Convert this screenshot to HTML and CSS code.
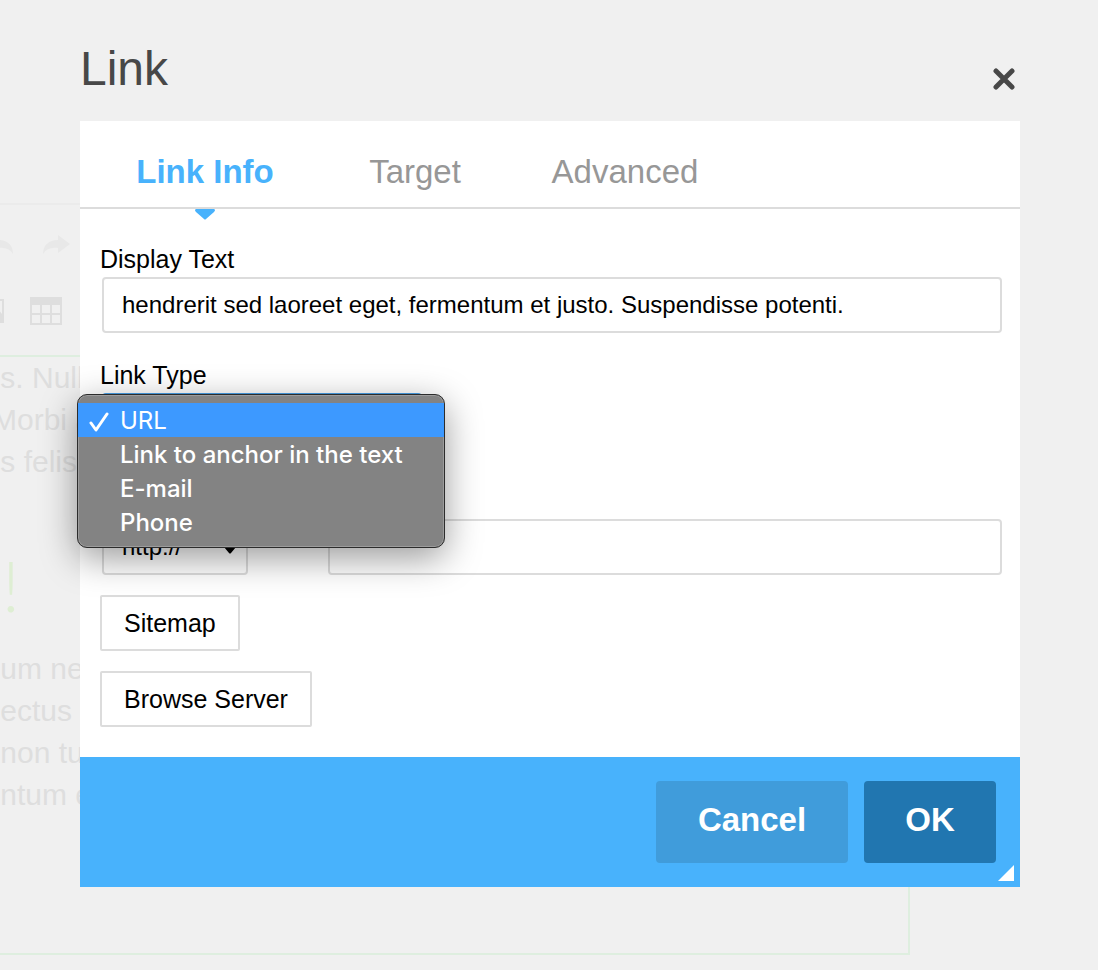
FILE: index.html
```html
<!DOCTYPE html>
<html lang="en">
<head>
    <meta charset="UTF-8">
    <meta name="viewport" content="width=device-width, initial-scale=1.0">
    <title>Link</title>
    <link rel="stylesheet" href="styles.css">
</head>
<body>
    <!-- Editor behind the dialog -->
    <div class="editor" aria-hidden="true">
        <div class="toolbar">
            <div class="toolbar-row history">
                <svg width="28" height="20" viewBox="0 0 28 20"><path d="M12 0 0 9l12 9v-5c7-1 12 1 15 6C27 10 21 5 12 5z"/></svg>
                <svg width="28" height="20" viewBox="0 0 28 20"><path d="M16 0l12 9-12 9v-5C9 12 4 14 1 19 1 10 7 5 16 5z"/></svg>
            </div>
            <div class="toolbar-row insert">
                <svg width="32" height="28" viewBox="0 0 32 28"><path fill-rule="evenodd" d="M0 2h32v24H0zM2 4v20h28V4z"/><path d="M2 24l8-12 7 6 6-10 7 9v7z"/></svg>
                <svg width="32" height="28" viewBox="0 0 32 28"><path fill-rule="evenodd" d="M0 0h32v28H0zM2 8v8h8V8zM12 8v8h8V8zM22 8v8h8V8zM2 18v8h8v-8zM12 18v8h8v-8zM22 18v8h8v-8z"/></svg>
            </div>
        </div>
        <div class="document">
            <p> s. Nulla
Morbi ac
 s felis</p>
            <h2>!</h2>
            <p> um nec
 ectus
 non tur
 ntum eu</p>
        </div>
    </div>

    <div class="overlay">
        <div class="dialog" role="dialog" aria-labelledby="dialogTitle">
            <div class="dialog-header">
                <h1 id="dialogTitle">Link</h1>
                <button type="button" class="close" aria-label="Close">
                    <svg width="22" height="22" viewBox="0 0 22 22"><path d="M3 3l16 16M19 3L3 19"/></svg>
                </button>
            </div>
            <form class="panel">
                <div class="tabs" role="tablist">
                    <button type="button" class="tab active" role="tab" aria-selected="true">Link Info
                        <svg class="tab-arrow" width="20" height="11" viewBox="0 0 20 11"><path d="M1 0h18q2 1 0 3l-8 7q-1 1-2 0L1 3q-2-2 0-3z"/></svg>
                    </button>
                    <button type="button" class="tab" role="tab">Target</button>
                    <button type="button" class="tab" role="tab">Advanced</button>
                </div>

                <div class="content">
                    <div class="field">
                        <label for="displayText">Display Text</label>
                        <input type="text" id="displayText" value="hendrerit sed laoreet eget, fermentum et justo. Suspendisse potenti.">
                    </div>
                    <div class="field link-type">
                        <label for="linkType">Link Type</label>
                        <select id="linkType">
                            <option>URL</option>
                            <option>Link to anchor in the text</option>
                            <option>E-mail</option>
                            <option>Phone</option>
                        </select>
                        <div class="menu">
                            <button type="button" class="menu-item selected">
                                <svg class="check" width="20" height="20" viewBox="0 0 20 20"><path d="M2 11l5 7L18 2"/></svg>URL
                            </button>
                            <button type="button" class="menu-item">Link to anchor in the text</button>
                            <button type="button" class="menu-item">E-mail</button>
                            <button type="button" class="menu-item">Phone</button>
                        </div>
                    </div>
                    <div class="url-row">
                        <div class="field protocol">
                            <label for="protocol">Protocol</label>
                            <select id="protocol">
                                <option>http://</option>
                                <option>https://</option>
                            </select>
                            <svg class="caret" width="14" height="10" viewBox="0 0 14 10"><path d="M1 0h12q2 1 0 3L8 9q-1 1-2 0L1 3q-2-2 0-3z"/></svg>
                        </div>
                        <div class="field url">
                            <label for="url">URL</label>
                            <input type="text" id="url">
                        </div>
                    </div>
                    <button type="button" class="action">Sitemap</button>
                    <button type="button" class="action">Browse Server</button>
                </div>

                <div class="footer">
                    <button type="button" class="cancel">Cancel</button>
                    <button type="submit" class="ok">OK</button>
                    <svg class="resizer" width="16" height="16" viewBox="0 0 16 16"><path d="M16 0v16H0z"/></svg>
                </div>
            </form>
        </div>
    </div>
</body>
</html>
```

FILE: styles.css
```css
* {
    box-sizing: border-box;
}
body {
    margin: 0;
    min-height: 100vh;
    position: relative;
    overflow: hidden;
    background-color: #f0f0f0;
    font-family: "Liberation Sans", Arial, sans-serif;
    font-size: 24px;
    line-height: 28px;
}
button, input, select {
    font: inherit;
    color: #000;
}
button {
    cursor: pointer;
}

/* editor */
.editor {
    margin: 203px 188px 0 0;
    color: #dedede;
}
.toolbar {
    height: 152px;
    border-top: 2px solid #ebebeb;
}
.toolbar-row {
    display: flex;
    fill: currentColor;
}
.history {
    gap: 28px;
    margin-left: -14px;
    padding-top: 30px;
    color: #e8e8e8;
}
.insert {
    gap: 26px;
    margin-left: -28px;
    padding-top: 42px;
}
.document {
    height: 600px;
    border: 2px solid #deeedf;
    border-left: none;
}
.document p {
    margin: 0 0 0 -8px;
    font-size: 30px;
    line-height: 42px;
    white-space: pre;
}
.document h2 {
    margin: 60px 0 21px;
    padding-left: 2px;
    font-family: Lato, sans-serif;
    font-size: 70px;
    font-weight: 300;
    line-height: 84px;
    color: #deeed3;
}

/* dialog */
.overlay {
    position: absolute;
    inset: 0;
    padding: 39px 78px 0 80px;
}
.dialog-header {
    display: flex;
    justify-content: space-between;
    align-items: center;
    height: 82px;
    padding-bottom: 22px;
}
h1 {
    margin: 0;
    font-size: 48px;
    font-weight: normal;
    line-height: 60px;
    color: #484848;
}
.close {
    margin: 20px 5px 0 0;
    padding: 0;
    border: none;
    background: none;
    line-height: 0;
}
.close path {
    stroke: #484848;
    stroke-width: 5;
    stroke-linecap: round;
}
.panel {
    background-color: #fff;
}
.tabs {
    display: flex;
    padding-left: 20px;
    border-bottom: 2px solid #dcdcdc;
}
.tab {
    position: relative;
    width: 210px;
    height: 86px;
    padding: 16px 0 0;
    border: none;
    background: none;
    font-size: 33px;
    color: #979797;
}
.tab.active {
    font-weight: bold;
    color: #48b2fc;
}
.tab-arrow {
    position: absolute;
    top: 88px;
    left: 95px;
    fill: #48b2fc;
}
.content {
    padding: 36px 18px 30px 20px;
}
.field {
    position: relative;
    margin-bottom: 28px;
}
label {
    display: block;
    margin-bottom: 4px;
    font-size: 25px;
}
input, select {
    display: block;
    width: calc(100% - 2px);
    height: 56px;
    margin-left: 2px;
    padding: 0 18px;
    border: 2px solid #dcdcdc;
    border-radius: 4px;
    background-color: #fff;
    appearance: none;
}
.link-type {
    margin-bottom: 38px;
}
.link-type select {
    width: 320px;
    border-color: #48a0e8;
}
.url-row {
    display: flex;
    gap: 78px;
}
.url-row .field {
    margin-bottom: 20px;
}
.protocol {
    width: 148px;
}
.url {
    flex: 1;
}
.caret {
    position: absolute;
    right: 11px;
    bottom: 21px;
}
.action {
    display: block;
    height: 56px;
    padding: 0 22px;
    border: 2px solid #dcdcdc;
    border-radius: 2px;
    background-color: #fff;
    font-size: 25px;
}
.action + .action {
    margin-top: 20px;
}

/* open drop-down */
.menu {
    position: absolute;
    top: 33px;
    left: -23px;
    z-index: 1;
    width: 368px;
    padding: 8px 0;
    border: 1px solid #2c2c2c;
    border-radius: 10px;
    background-color: #838383;
    box-shadow: inset 0 0 0 1px #9c9c9c, 0 10px 36px rgba(0, 0, 0, 0.4);
}
.menu-item {
    position: relative;
    display: block;
    width: 100%;
    height: 34px;
    padding: 2px 0 0 42px;
    border: none;
    background: none;
    font-family: Inter, sans-serif;
    font-size: 24px;
    font-weight: 500;
    text-align: left;
    color: #fff;
}
.menu-item.selected {
    background-color: #3d99ff;
    font-weight: normal;
}
.check {
    position: absolute;
    top: 9px;
    left: 11px;
    fill: none;
    stroke: #fff;
    stroke-width: 3;
    stroke-linecap: round;
    stroke-linejoin: round;
}

.footer {
    position: relative;
    display: flex;
    justify-content: flex-end;
    gap: 16px;
    padding: 24px;
    background-color: #48b2fc;
}
.footer button {
    height: 82px;
    padding: 0 40px 4px;
    border: none;
    border-radius: 4px;
    font-size: 33px;
    font-weight: bold;
    color: #fff;
}
.footer .cancel {
    min-width: 192px;
    background-color: #409cdb;
}
.footer .ok {
    min-width: 132px;
    background-color: #2176b0;
}
.resizer {
    position: absolute;
    right: 6px;
    bottom: 6px;
    fill: #fff;
}
```
